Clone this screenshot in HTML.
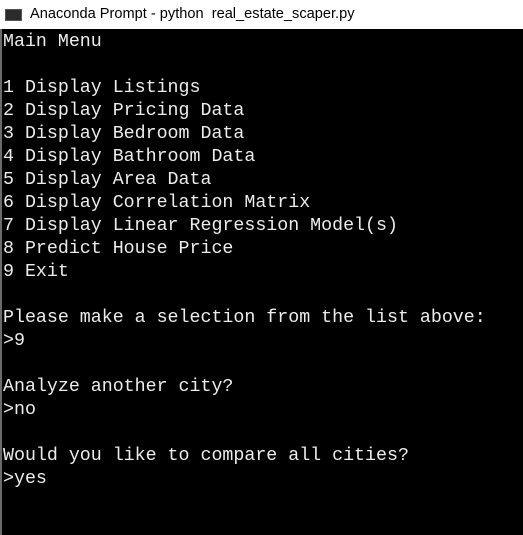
<!DOCTYPE html>
<html><head><style>
html,body{margin:0;padding:0;width:523px;height:535px;overflow:hidden;background:#000}
.title{position:absolute;left:0;top:0;width:523px;height:29px;background:#fff;}
.title .ic{position:absolute;left:5px;top:9px;width:17px;height:12px;background:#2b2b2b;border:1px solid #555;box-sizing:border-box}
.title .t{position:absolute;left:30px;top:6px;font:14.6px "Liberation Sans",sans-serif;color:#000;white-space:pre}
.lb{position:absolute;left:0;top:29px;width:2px;height:506px;background:#6b6b6b}
pre{position:absolute;left:3px;top:31px;margin:0;font-family:"Liberation Mono",monospace;font-size:18.3px;line-height:23px;color:#ececec}
</style></head><body>
<div class="title"><div class="ic"></div><div class="t">Anaconda Prompt - python  real_estate_scaper.py</div></div>
<div class="lb"></div>
<pre>Main Menu

1 Display Listings
2 Display Pricing Data
3 Display Bedroom Data
4 Display Bathroom Data
5 Display Area Data
6 Display Correlation Matrix
7 Display Linear Regression Model(s)
8 Predict House Price
9 Exit

Please make a selection from the list above:
&gt;9

Analyze another city?
&gt;no

Would you like to compare all cities?
&gt;yes</pre>
</body></html>
